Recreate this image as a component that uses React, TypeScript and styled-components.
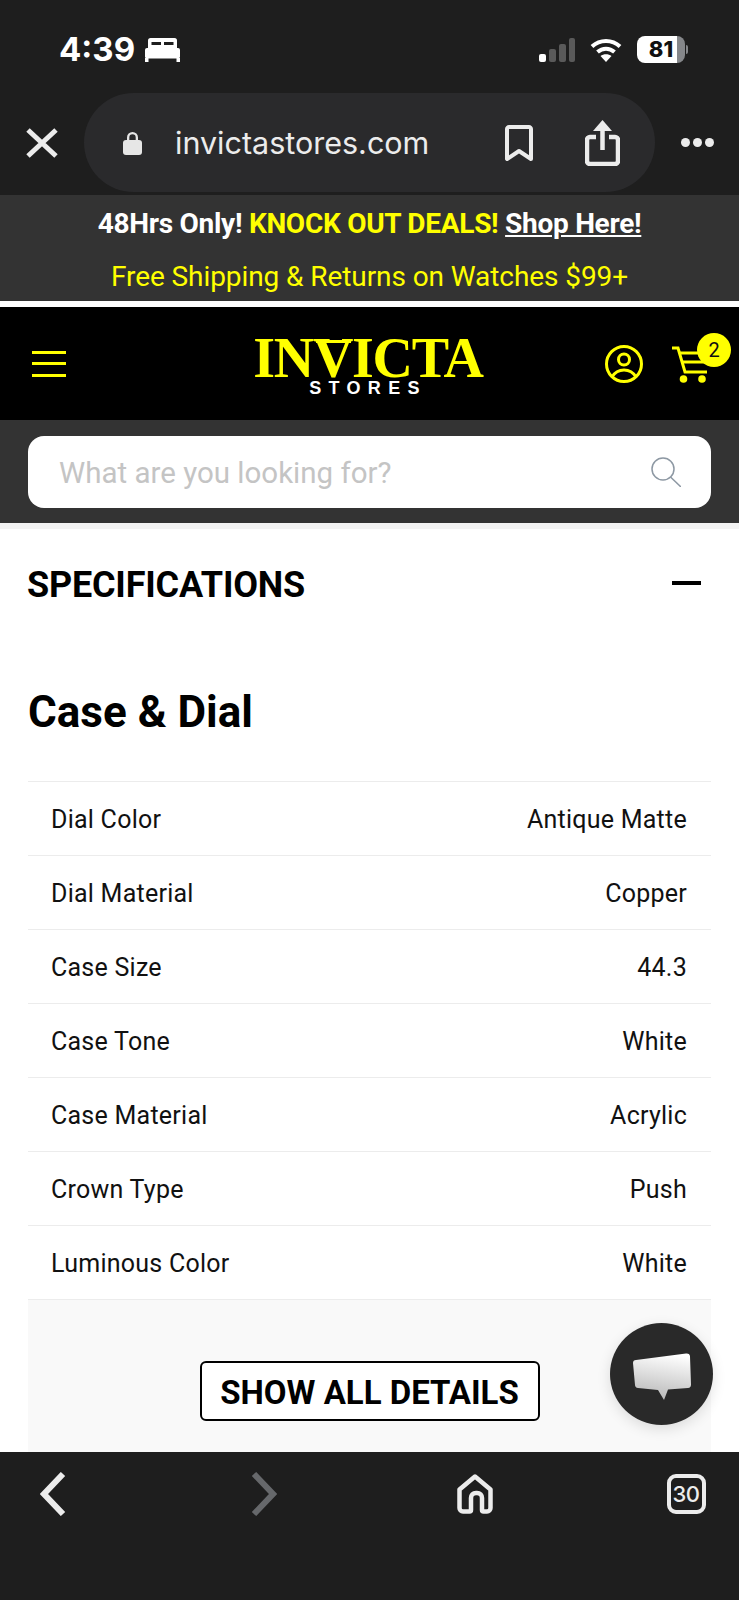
import React from 'react';
import styled, { createGlobalStyle } from 'styled-components';

const specs = [
  ['Dial Color', 'Antique Matte'],
  ['Dial Material', 'Copper'],
  ['Case Size', '44.3'],
  ['Case Tone', 'White'],
  ['Case Material', 'Acrylic'],
  ['Crown Type', 'Push'],
  ['Luminous Color', 'White'],
];

const App = () => {
  return (
    <>
      <GlobalStyle />
      <Page>
        <StatusBar>
          <TimeGroup>
            <Time>4:39</Time>
            <svg width="35" height="24" viewBox="0 0 35 24" fill="#fff">
              <rect x="3" y="0" width="29" height="12" rx="2.500" />
              <rect x="6.500" y="4" width="9.500" height="3" fill="#1e1e1e" />
              <rect x="19" y="4" width="9.500" height="3" fill="#1e1e1e" />
              <rect x="0" y="10" width="35" height="10.500" rx="2" />
              <rect x="0" y="20" width="3.500" height="4" />
              <rect x="31.500" y="20" width="3.500" height="4" />
            </svg>
          </TimeGroup>
          <StatusIcons>
            <svg width="36" height="24" viewBox="0 0 36 24">
              <rect x="0" y="16" width="7" height="8" rx="2" fill="#fff" />
              <rect x="10" y="11" width="7" height="13" rx="2" fill="#5a5a5a" />
              <rect x="20" y="6" width="7" height="18" rx="2" fill="#5a5a5a" />
              <rect x="30" y="0" width="6" height="24" rx="2" fill="#5a5a5a" />
            </svg>
            <svg width="32" height="24" viewBox="0 0 32 24" fill="none" stroke="#fff" strokeWidth="4">
              <path d="M2 8.500C10 1 22 1 30 8.500" />
              <path d="M7.500 14c5-4.500 12-4.500 17 0" />
              <path d="M16 24l-5.500-6c3-2.500 8-2.500 11 0z" fill="#fff" stroke="none" />
            </svg>
            <Battery>
              <BatteryLevel>81</BatteryLevel>
              <BatteryCap />
            </Battery>
          </StatusIcons>
        </StatusBar>

        <Toolbar>
          <svg width="32" height="30" viewBox="0 0 32 30" stroke="#ececec" strokeWidth="5" fill="none">
            <path d="M2 2l28 26M30 2L2 28" />
          </svg>
          <UrlPill>
            <svg width="19" height="24" viewBox="0 0 19 24" fill="#e6e6e6">
              <path d="M4 10V6.500a5.500 5.500 0 0 1 11 0V10h-2.300V6.500a3.200 3.200 0 0 0-6.400 0V10z" />
              <rect y="9" width="19" height="15" rx="3" />
            </svg>
            <UrlText>invictastores.com</UrlText>
            <PillActions>
              <svg width="28" height="36" viewBox="0 0 28 36" fill="none" stroke="#ececec" strokeWidth="4">
                <path d="M2 34V4c0-1 1-2 2-2h20c1 0 2 1 2 2v30l-12-8z" strokeLinejoin="round" />
              </svg>
              <svg width="35" height="46" viewBox="0 0 35 46" fill="none" stroke="#ececec" strokeWidth="4.500">
                <path d="M11 17H5c-1.700 0-3 1.300-3 3v21c0 1.700 1.300 3 3 3h25c1.700 0 3-1.300 3-3V20c0-1.700-1.300-3-3-3h-6" />
                <path d="M17.500 30V4" />
                <path d="M17.500 0l9.500 11h-19z" fill="#ececec" stroke="none" />
              </svg>
            </PillActions>
          </UrlPill>
          <Dots>
            <span />
            <span />
            <span />
          </Dots>
        </Toolbar>

        <PromoBar>
          <PromoLine>
            48Hrs Only! <Yellow>KNOCK OUT DEALS!</Yellow> <ShopLink>Shop Here!</ShopLink>
          </PromoLine>
          <FreeShipping>Free Shipping &amp; Returns on Watches $99+</FreeShipping>
        </PromoBar>

        <Header>
          <MenuIcon>
            <span />
            <span />
            <span />
          </MenuIcon>
          <Logo>
            <LogoName>
              IN<LogoV>V</LogoV>ICTA
            </LogoName>
            <LogoSub>STORES</LogoSub>
          </Logo>
          <HeaderIcons>
            <svg width="38" height="38" viewBox="0 0 38 38" fill="none" stroke="#ffff00" strokeWidth="3">
              <circle cx="19" cy="19" r="17.500" />
              <circle cx="19" cy="14.500" r="5.500" />
              <path d="M7 32c3-5 7-7 12-7s9 2 12 7" />
            </svg>
            <CartWrap>
              <svg width="36" height="38" viewBox="0 0 36 38" fill="none" stroke="#ffff00" strokeWidth="3">
                <path d="M0 3h6l7 24h22" />
                <path d="M8 8h27" />
                <path d="M10 17h25" />
                <circle cx="11.500" cy="34" r="3.800" fill="#ffff00" stroke="none" />
                <circle cx="30" cy="34" r="3.800" fill="#ffff00" stroke="none" />
              </svg>
              <CartBadge>2</CartBadge>
            </CartWrap>
          </HeaderIcons>
        </Header>

        <SearchBar>
          <SearchBox>
            <Placeholder>What are you looking for?</Placeholder>
            <svg width="30" height="30" viewBox="0 0 30 30" fill="none" stroke="#8d98a3" strokeWidth="1.500">
              <circle cx="12" cy="12" r="11" />
              <path d="M19.500 20L30 30" />
            </svg>
          </SearchBox>
        </SearchBar>

        <Main>
          <SpecHeader>
            <SpecTitle>SPECIFICATIONS</SpecTitle>
            <Minus />
          </SpecHeader>
          <GroupTitle>Case &amp; Dial</GroupTitle>
          {specs.map(([label, value]) => (
            <SpecRow key={label}>
              <span>{label}</span>
              <span>{value}</span>
            </SpecRow>
          ))}
          <MorePanel>
            <ShowAll>SHOW ALL DETAILS</ShowAll>
          </MorePanel>
        </Main>

        <BottomBar>
          <NavSlot>
            <svg width="26" height="44" viewBox="0 0 26 44" fill="none" stroke="#ececec" strokeWidth="6">
              <path d="M23 2L4 22l19 20" />
            </svg>
          </NavSlot>
          <NavSlot>
            <svg width="26" height="44" viewBox="0 0 26 44" fill="none" stroke="#66686b" strokeWidth="6">
              <path d="M3 2l19 20L3 42" />
            </svg>
          </NavSlot>
          <NavSlot>
            <svg width="36" height="40" viewBox="0 0 36 40" fill="none" stroke="#ececec" strokeWidth="4.500" strokeLinejoin="round">
              <path d="M2.500 15.500L18 2.500l15.500 13V34c0 2-1.500 3.500-3.500 3.500h-3.500c-1 0-1.500-.5-1.500-1.500V24c0-3-2-5-5-5h-1c-3 0-5 2-5 5v12c0 1-.5 1.500-1.500 1.500H6c-2 0-3.500-1.500-3.500-3.500z" />
            </svg>
          </NavSlot>
          <NavSlot>
            <TabCount>30</TabCount>
          </NavSlot>
        </BottomBar>

        <ChatButton>
          <svg width="58" height="47" viewBox="0 0 58 47">
            <defs>
              <linearGradient id="bubble" x1="0.600" y1="0" x2="0.400" y2="1">
                <stop offset="0" stopColor="#ffffff" />
                <stop offset="1" stopColor="#b8b8b8" />
              </linearGradient>
            </defs>
            <path d="M3 7L53 .5c2.500-.3 4 1 4 3l1 28c0 2-1 3.500-3 3.500l-20 1.500L31 47l-6-10-20-2c-2 0-3-1.500-3-3L0 10c0-2 1-3 3-3z" fill="url(#bubble)" />
          </svg>
        </ChatButton>
      </Page>
    </>
  );
};

export default App;

const GlobalStyle = createGlobalStyle`
  html, body {
    margin: 0;
    padding: 0;
    background: #1e1e1e;
  }
`;

const Page = styled.div`
  position: relative;
  width: 739px;
  height: 1600px;
  display: flex;
  flex-direction: column;
  overflow: hidden;
  font-family: Roboto, 'Liberation Sans', sans-serif;
  background: #fff;
`;

const StatusBar = styled.div`
  height: 93px;
  flex-shrink: 0;
  background: #1e1e1e;
  display: flex;
  align-items: center;
  justify-content: space-between;
  padding: 10px 51px 4px 59px;
  box-sizing: border-box;
`;

const TimeGroup = styled.div`
  display: flex;
  align-items: center;
  gap: 10px;
`;

const Time = styled.span`
  font-family: Inter, sans-serif;
  font-size: 33px;
  font-weight: 700;
  color: #fff;
  line-height: 1;
`;

const StatusIcons = styled.div`
  display: flex;
  align-items: center;
  gap: 15px;
`;

const Battery = styled.div`
  display: flex;
  align-items: center;
  gap: 1px;
`;

const BatteryLevel = styled.div`
  width: 48px;
  height: 27px;
  border-radius: 8px;
  background: linear-gradient(90deg, #fff 83%, #85878a 83%);
  color: #111;
  font-family: Inter, sans-serif;
  font-size: 22px;
  font-weight: 800;
  line-height: 27px;
  text-align: center;
`;

const BatteryCap = styled.div`
  width: 2px;
  height: 9px;
  border-radius: 0 2px 2px 0;
  background: #85878a;
`;

const Toolbar = styled.div`
  height: 102px;
  flex-shrink: 0;
  background: #1e1e1e;
  display: flex;
  align-items: center;
  gap: 26px;
  padding: 0 25px 3px 26px;
  box-sizing: border-box;
`;

const UrlPill = styled.div`
  flex: 1;
  height: 99px;
  border-radius: 50px;
  background: #2a2a2c;
  display: flex;
  align-items: center;
  padding: 0 35px 0 39px;
  box-sizing: border-box;
`;

const UrlText = styled.span`
  margin-left: 33px;
  font-family: Inter, sans-serif;
  font-size: 30.500px;
  color: #ececec;
`;

const PillActions = styled.div`
  margin-left: auto;
  display: flex;
  align-items: center;
  gap: 52px;
`;

const Dots = styled.div`
  display: flex;
  gap: 3px;
  span {
    width: 9px;
    height: 9px;
    border-radius: 50%;
    background: #ececec;
  }
`;

const PromoBar = styled.div`
  height: 104px;
  flex-shrink: 0;
  background: #333;
  border-bottom: 6px solid #fff;
  padding-top: 2px;
  display: flex;
  flex-direction: column;
  align-items: center;
  font-size: 28px;
  line-height: 53px;
`;

const PromoLine = styled.div`
  font-weight: 700;
  color: #fff;
  letter-spacing: -0.28px;
`;

const Yellow = styled.span`
  color: #ffff00;
`;

const ShopLink = styled.span`
  text-decoration: underline;
`;

const FreeShipping = styled.div`
  color: #ffff00;
  font-weight: 400;
  letter-spacing: -0.08px;
`;

const Header = styled.div`
  height: 113px;
  flex-shrink: 0;
  background: #000;
  display: grid;
  grid-template-columns: 1fr auto 1fr;
  align-items: center;
  padding: 0 31px 0 32px;
  box-sizing: border-box;
`;

const MenuIcon = styled.div`
  width: 34px;
  display: flex;
  flex-direction: column;
  gap: 8.500px;
  span {
    height: 3px;
    background: #ffff00;
  }
`;

const Logo = styled.div`
  display: flex;
  flex-direction: column;
  align-items: center;
  margin: 5px 4px 0 0;
`;

const LogoName = styled.div`
  font-family: 'Liberation Serif', serif;
  font-size: 56px;
  font-weight: 700;
  line-height: 44px;
  letter-spacing: -1.300px;
  color: #ffff00;
`;

const LogoV = styled.span`
  position: relative;
  display: inline-block;
  &::before {
    content: '';
    position: absolute;
    top: 4px;
    left: 3px;
    right: 1px;
    height: 3px;
    background: #ffff00;
  }
`;

const LogoSub = styled.div`
  font-family: 'Liberation Sans', sans-serif;
  font-size: 18px;
  font-weight: 700;
  line-height: 16px;
  letter-spacing: 7.300px;
  color: #fff;
`;

const HeaderIcons = styled.div`
  display: flex;
  justify-content: flex-end;
  align-items: center;
  gap: 29px;
`;

const CartWrap = styled.div`
  position: relative;
  height: 38px;
`;

const CartBadge = styled.div`
  position: absolute;
  top: -12px;
  left: 25px;
  width: 34px;
  height: 34px;
  border-radius: 50%;
  background: #ffff00;
  color: #111;
  font-size: 20px;
  line-height: 34px;
  text-align: center;
`;

const SearchBar = styled.div`
  height: 103px;
  flex-shrink: 0;
  background: #333;
  padding: 16px 28px 15px;
  box-sizing: border-box;
`;

const SearchBox = styled.div`
  height: 72px;
  border-radius: 16px;
  background: #fff;
  display: flex;
  align-items: center;
  justify-content: space-between;
  padding: 0 30px 0 31px;
  box-sizing: border-box;
`;

const Placeholder = styled.span`
  margin-top: 2px;
  font-size: 29.500px;
  color: #c4c4c4;
`;

const Main = styled.div`
  flex: 1;
  min-height: 0;
  border-top: 6px solid #f3f3f3;
  padding: 0 28px;
  background: #fff;
`;

const SpecHeader = styled.div`
  height: 108px;
  box-sizing: border-box;
  padding: 3px 10px 0 0;
  display: flex;
  align-items: center;
  justify-content: space-between;
`;

const SpecTitle = styled.h2`
  margin: 0 0 0 -1px;
  font-size: 36px;
  font-weight: 700;
  letter-spacing: -0.2px;
  color: #000;
`;

const Minus = styled.div`
  width: 29px;
  height: 4px;
  margin-top: -3px;
  background: #000;
`;

const GroupTitle = styled.h3`
  margin: 0;
  height: 144px;
  padding-top: 5px;
  box-sizing: border-box;
  display: flex;
  align-items: center;
  font-size: 44px;
  font-weight: 700;
  color: #000;
`;

const SpecRow = styled.div`
  height: 74px;
  box-sizing: border-box;
  border-top: 1px solid #ececec;
  display: flex;
  align-items: center;
  justify-content: space-between;
  padding: 2px 24px 0 23px;
  font-size: 25px;
  letter-spacing: 0.25px;
  color: #111;
`;

const MorePanel = styled.div`
  height: 153px;
  box-sizing: border-box;
  border-top: 1px solid #ececec;
  background: #f9f9f9;
  padding-top: 61px;
  display: flex;
  justify-content: center;
  align-items: flex-start;
`;

const ShowAll = styled.button`
  width: 340px;
  height: 60px;
  border: 2px solid #000;
  border-radius: 6px;
  background: #fff;
  font-family: inherit;
  font-size: 33px;
  font-weight: 700;
  color: #000;
  padding: 2px 0 0;
`;

const BottomBar = styled.div`
  height: 148px;
  flex-shrink: 0;
  background: #1e1e1e;
  display: flex;
  align-items: flex-start;
  justify-content: space-between;
  padding: 20px 33px 0 33px;
  box-sizing: border-box;
`;

const NavSlot = styled.div`
  width: 40px;
  height: 44px;
  display: flex;
  align-items: center;
  justify-content: center;
`;

const TabCount = styled.div`
  width: 39px;
  height: 40px;
  border: 4px solid #ececec;
  border-radius: 9px;
  box-sizing: border-box;
  color: #ececec;
  font-family: Inter, sans-serif;
  font-size: 22px;
  font-weight: 500;
  line-height: 32px;
  text-align: center;
  letter-spacing: -0.5px;
`;

const ChatButton = styled.div`
  position: absolute;
  left: 610px;
  top: 1323px;
  width: 103px;
  height: 102px;
  border-radius: 50%;
  background: #292929;
  box-shadow: 0 4px 14px rgba(0, 0, 0, 0.12);
  display: flex;
  align-items: center;
  justify-content: center;
  padding-top: 4px;
  box-sizing: border-box;
`;
